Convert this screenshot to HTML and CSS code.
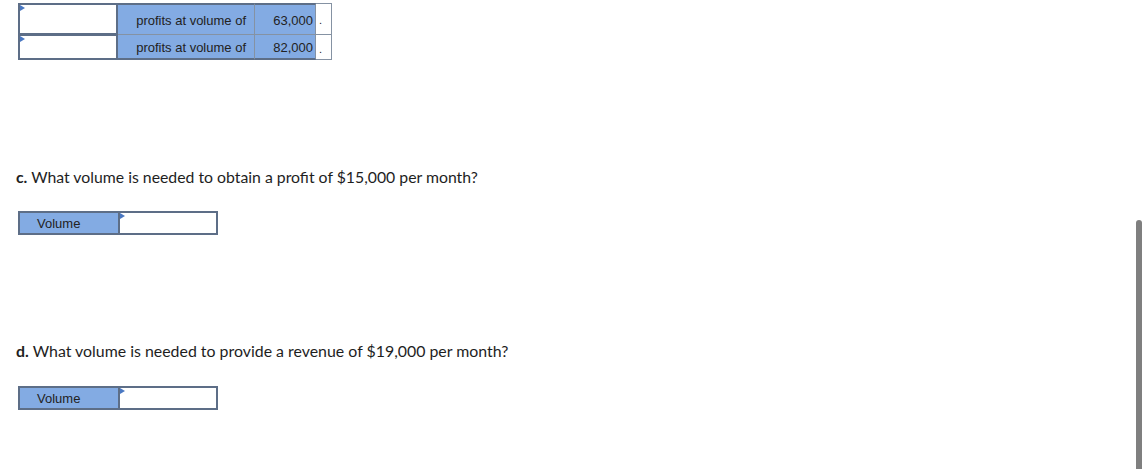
FILE: index.html
```html
<!DOCTYPE html>
<html>
<head>
<meta charset="utf-8">
<link rel="stylesheet" href="styles.css">
</head>
<body>
<div class="page">
  <div class="grid">
    <div class="cell inp r1"><span class="flag"></span></div>
    <div class="cell lbl r1">profits at volume of</div>
    <div class="cell num r1">63,000</div>
    <div class="cell dot r1">.</div>
    <div class="cell inp r2"><span class="flag"></span></div>
    <div class="cell lbl r2">profits at volume of</div>
    <div class="cell num r2">82,000</div>
    <div class="cell dot r2">.</div>
  </div>

  <p class="q q-c"><b>c.</b> What volume is needed to obtain a profit of $15,000 per month?</p>
  <div class="vol">
    <div class="vlbl">Volume</div>
    <div class="vinp"><span class="flag"></span></div>
  </div>

  <p class="q q-d"><b>d.</b> What volume is needed to provide a revenue of $19,000 per month?</p>
  <div class="vol">
    <div class="vlbl">Volume</div>
    <div class="vinp"><span class="flag"></span></div>
  </div>
</div>
<div class="scrollbar"></div>
</body>
</html>
```
FILE: styles.css
```css
html, body {
  margin: 0;
  padding: 0;
  background: #fff;
}
.page {
  padding: 3px 0 0 18px;
  font-family: "Lato", "Open Sans", sans-serif;
  color: #1e1e1e;
}
.grid {
  display: grid;
  grid-template-columns: 100px 137px 61px 16px;
  grid-template-rows: 32px 25px;
  width: 314px;
  font-family: "Liberation Sans", Arial, sans-serif;
  font-size: 13px;
  color: #222;
}
.cell {
  box-sizing: border-box;
  display: flex;
  align-items: center;
}
.inp {
  background: #fff;
  border: 2px solid #5d6e87;
  align-items: flex-start;
}
.inp.r2 {
  border-top-width: 1px;
}
.lbl, .num {
  background: #83abe3;
  justify-content: flex-end;
  border-right: 1px solid #8592a3;
}
.lbl {
  padding-right: 8px;
}
.num {
  padding-right: 2px;
}
.r1.lbl, .r1.num, .r1.dot {
  border-top: 2px solid #5d6e87;
  border-bottom: 1px solid #8592a3;
  padding-top: 2px;
}
.r1.dot {
  border-top: 1px solid #8592a3;
}
.r2.lbl, .r2.num {
  border-bottom: 2px solid #5d6e87;
  padding-top: 2px;
}
.dot {
  background: #fff;
  border-right: 1px solid #8592a3;
  border-bottom: 1px solid #8592a3;
  padding-left: 3px;
  font-size: 11px;
  padding-top: 4px;
}
.r2.dot {
  padding-top: 3px;
}
.flag {
  display: block;
  width: 0;
  height: 0;
  border-top: 3px solid transparent;
  border-bottom: 3px solid transparent;
  border-left: 5px solid #4a78c2;
}
.q {
  margin: 0 0 0 -2px;
  font-size: 15.8px;
  line-height: 20px;
}
.q b {
  font-weight: 700;
}
.q-c {
  margin-top: 107px;
}
.q-d {
  margin-top: 106px;
  font-size: 15.9px;
}
.vol {
  display: flex;
  box-sizing: border-box;
  width: 200px;
  height: 24px;
  margin-top: 24px;
  border: 2px solid #5d6e87;
  font-family: "Liberation Sans", Arial, sans-serif;
  font-size: 13px;
  color: #222;
}
.q-d + .vol {
  margin-top: 25px;
}
.vlbl {
  box-sizing: border-box;
  width: 100px;
  background: #83abe3;
  border-right: 2px solid #5d6e87;
  padding-left: 17px;
  display: flex;
  align-items: center;
}
.vinp {
  flex: 1;
  background: #fff;
}
.scrollbar {
  position: absolute;
  left: 1136px;
  top: 220px;
  width: 6px;
  height: 249px;
  background: #7f7f7f;
  border-radius: 3px 3px 0 0;
}
```
